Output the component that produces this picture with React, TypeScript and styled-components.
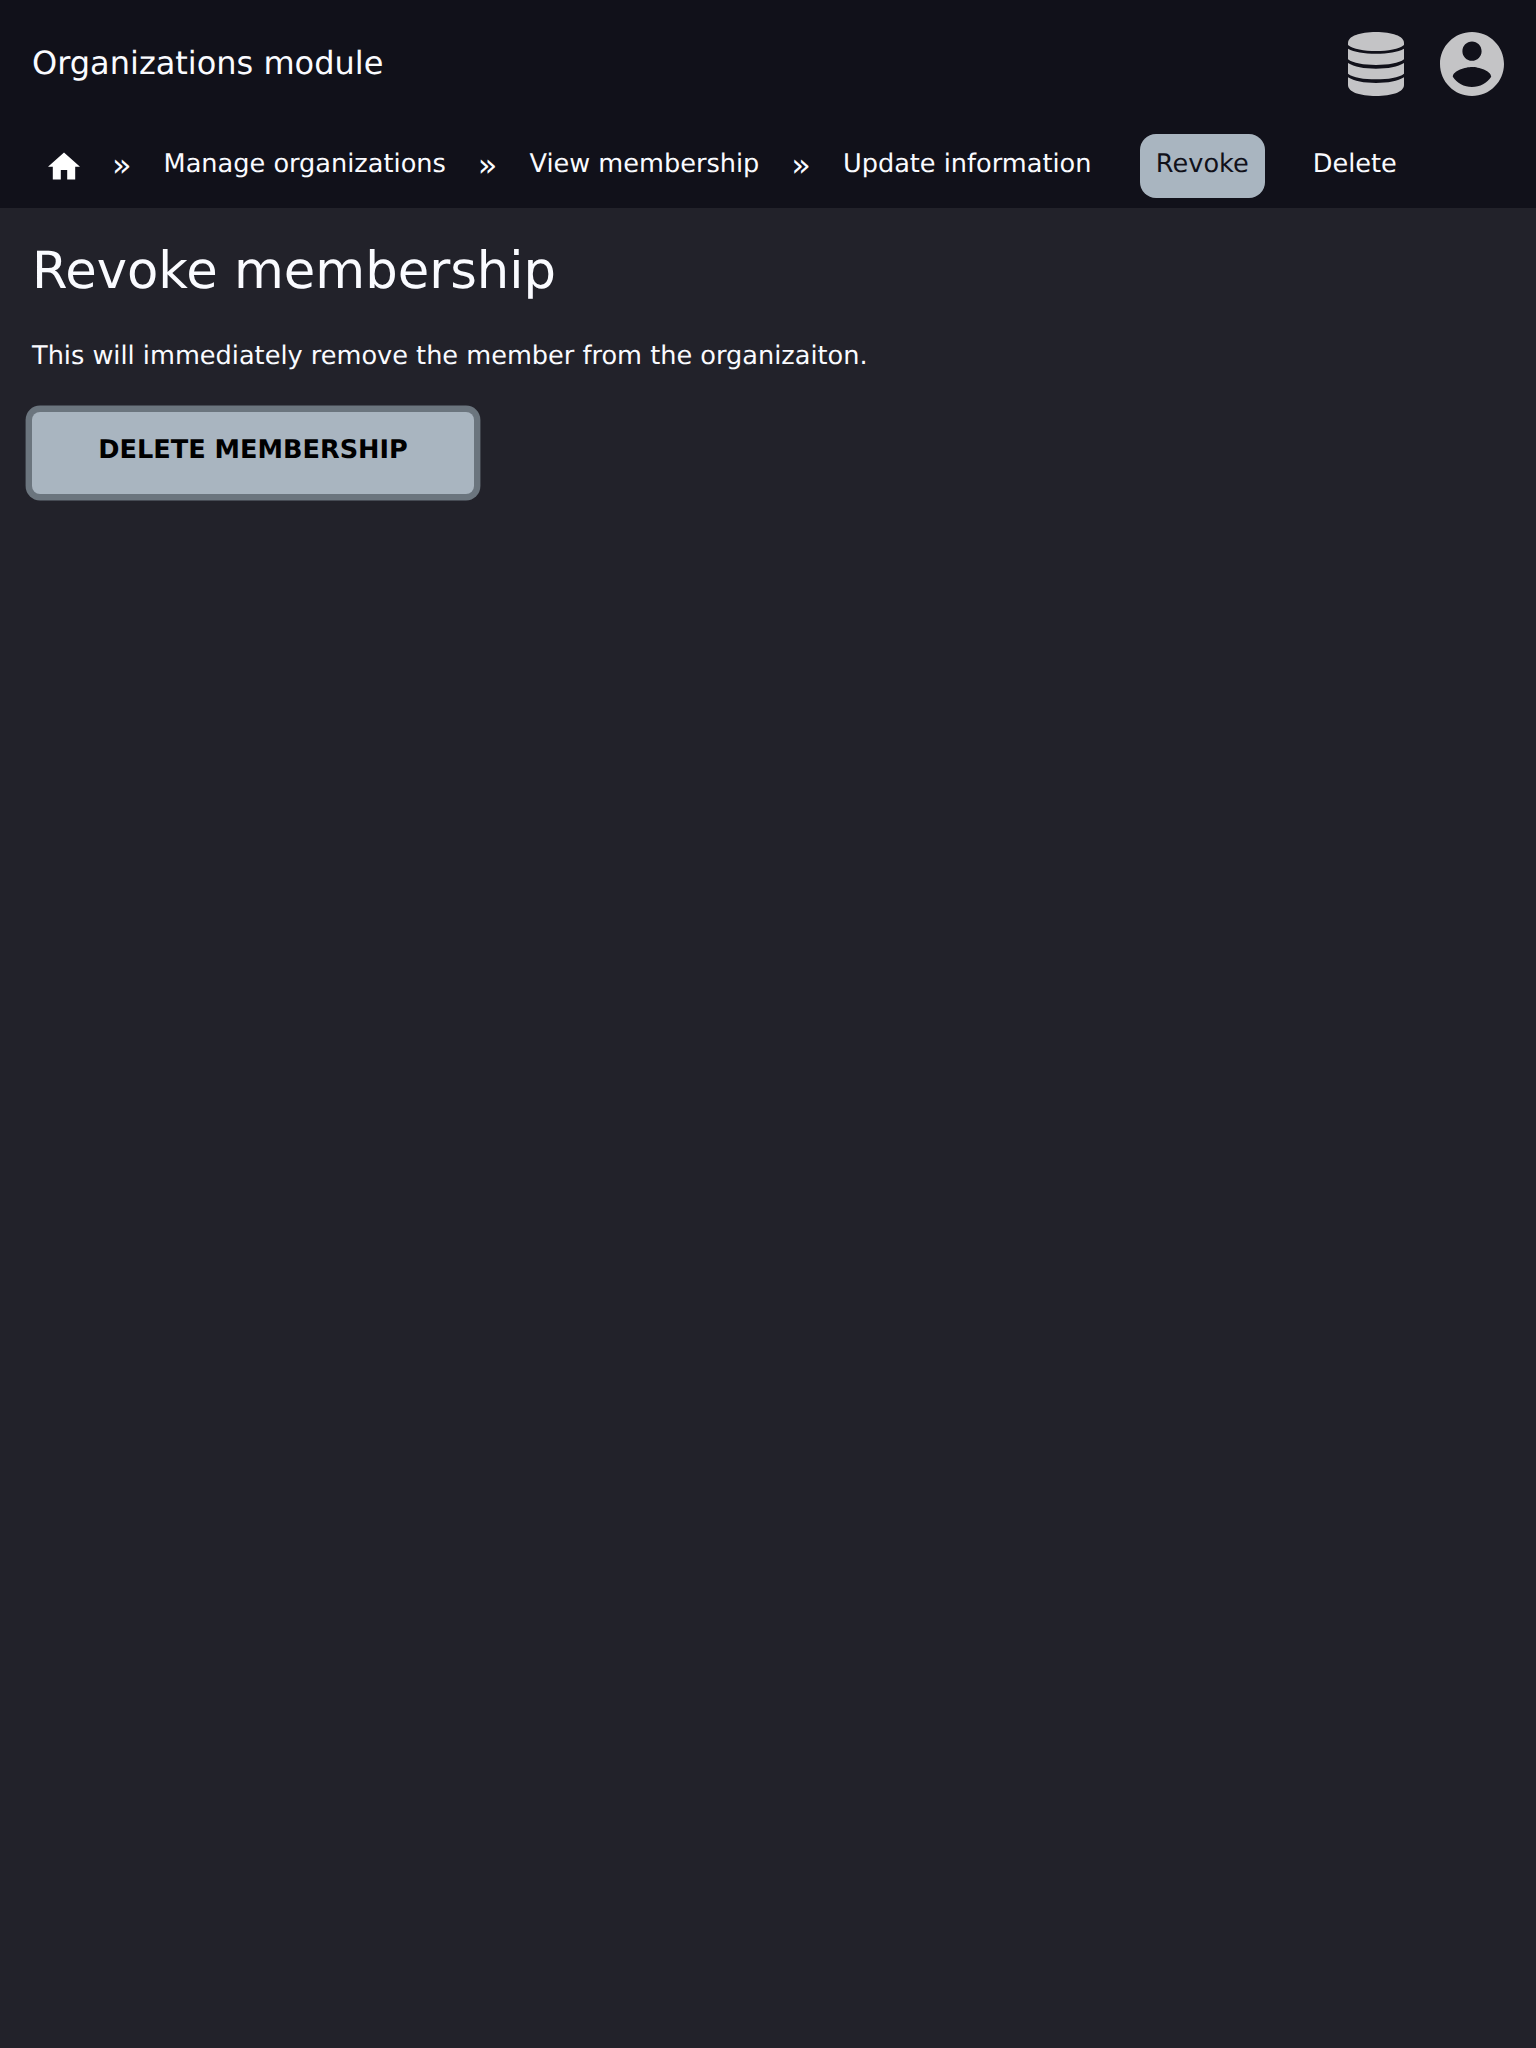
import React from "react";
import styled, { createGlobalStyle } from "styled-components";

const GlobalStyle = createGlobalStyle`
  body {
    margin: 0;
    min-height: 100vh;
    background: #22222a;
    color: #fafbff;
    font-family: "DejaVu Sans", sans-serif;
    font-size: 25.6px;
    line-height: 38.4px;
    text-rendering: geometricPrecision;
  }
`;

const Header = styled.header`
  height: 208px;
  background: #11111a;
`;

const TopBar = styled.div`
  display: flex;
  align-items: center;
  justify-content: space-between;
  height: 128px;
  padding: 0 32px;
`;

const ModuleTitle = styled.div`
  font-size: 32px;
  line-height: 48px;
  padding-bottom: 2px;
`;

const Actions = styled.div`
  display: flex;
  gap: 36px;
`;

const Icon = styled.svg<{ $width: number; $height: number; $tone?: string }>`
  display: block;
  width: ${(p) => p.$width}px;
  height: ${(p) => p.$height}px;
  fill: ${(p) => p.$tone ?? "#c4c4c6"};
`;

const Nav = styled.nav`
  display: flex;
  align-items: flex-start;
  height: 64px;
  padding: 6px 32px 0;
`;

const Crumb = styled.a<{ $active?: boolean; $gap?: number }>`
  box-sizing: border-box;
  height: 64px;
  margin-left: ${(p) => p.$gap ?? 0}px;
  padding: 11px 16px 9px;
  border-radius: 16px;
  color: ${(p) => (p.$active ? "#11111a" : "#fafbff")};
  background: ${(p) => (p.$active ? "#a9b5c0" : "transparent")};
  white-space: nowrap;
`;

const HomeLink = styled.a`
  padding: 18px 16px 0;
`;

const Separator = styled.span`
  margin: 12px 16px 0;
  font-size: 32px;
`;

const Main = styled.main`
  padding: 25px 32px;
`;

const Heading = styled.h1`
  margin: 0 0 28px;
  font-size: 51.2px;
  font-weight: 400;
  line-height: 76px;
`;

const Message = styled.p`
  margin: 0 0 36.6px;
`;

const SubmitButton = styled.button`
  display: block;
  width: 442px;
  height: 82px;
  padding: 0 0 6px;
  border: 0;
  border-radius: 8px;
  background: #a9b5c0;
  box-shadow: 0 0 0 6.4px #6b757e;
  color: #000;
  font: bold 25.6px "DejaVu Sans", sans-serif;
  text-rendering: geometricPrecision;
  text-transform: uppercase;
`;

export default function App() {
  return (
    <>
      <GlobalStyle />
      <Header>
        <TopBar>
          <ModuleTitle>Organizations module</ModuleTitle>
          <Actions>
            <Icon $width={56} $height={64} viewBox="0 0 56 64">
              <path d="M0 11C0 4 12 0 28 0s28 4 28 11v2c-5 4-16 6-28 6S5 17 0 13z" />
              <path d="M0 16.700c6 3.400 16 5 28 5s22-1.600 28-5v10.600c-5 4-16 5.700-28 5.700S5 31.300 0 27.300z" />
              <path d="M0 31c6 3.800 16 5.700 28 5.700S50 34.800 56 31v10.700c-5 4-16 5.600-28 5.600S5 45.700 0 41.700z" />
              <path d="M0 45.300C6 49.100 16 51 28 51s22-1.900 28-5.700V53c0 7-12 11-28 11S0 60 0 53z" />
            </Icon>
            <Icon $width={64} $height={64} viewBox="2 2 20 20">
              <path d="M12 2C6.48 2 2 6.48 2 12s4.48 10 10 10 10-4.48 10-10S17.52 2 12 2zm0 3c1.66 0 3 1.34 3 3s-1.34 3-3 3-3-1.34-3-3 1.34-3 3-3zm0 14.2c-2.5 0-4.71-1.28-6-3.22.03-1.99 4-3.08 6-3.08 1.99 0 5.97 1.09 6 3.08-1.29 1.94-3.5 3.22-6 3.22z" />
            </Icon>
          </Actions>
        </TopBar>
        <Nav>
          <HomeLink>
            <Icon $width={32} $height={28} $tone="#fff" viewBox="2 2.75 20 17.5">
              <path d="M10 20v-6h4v6h5v-8h3L12 3 2 12h3v8z" />
            </Icon>
          </HomeLink>
          <Separator>»</Separator>
          <Crumb>Manage organizations</Crumb>
          <Separator>»</Separator>
          <Crumb>View membership</Crumb>
          <Separator>»</Separator>
          <Crumb>Update information</Crumb>
          <Crumb $active $gap={32.4}>Revoke</Crumb>
          <Crumb $gap={32}>Delete</Crumb>
        </Nav>
      </Header>
      <Main>
        <Heading>Revoke membership</Heading>
        <Message>This will immediately remove the member from the organizaiton.</Message>
        <SubmitButton>Delete membership</SubmitButton>
      </Main>
    </>
  );
}
